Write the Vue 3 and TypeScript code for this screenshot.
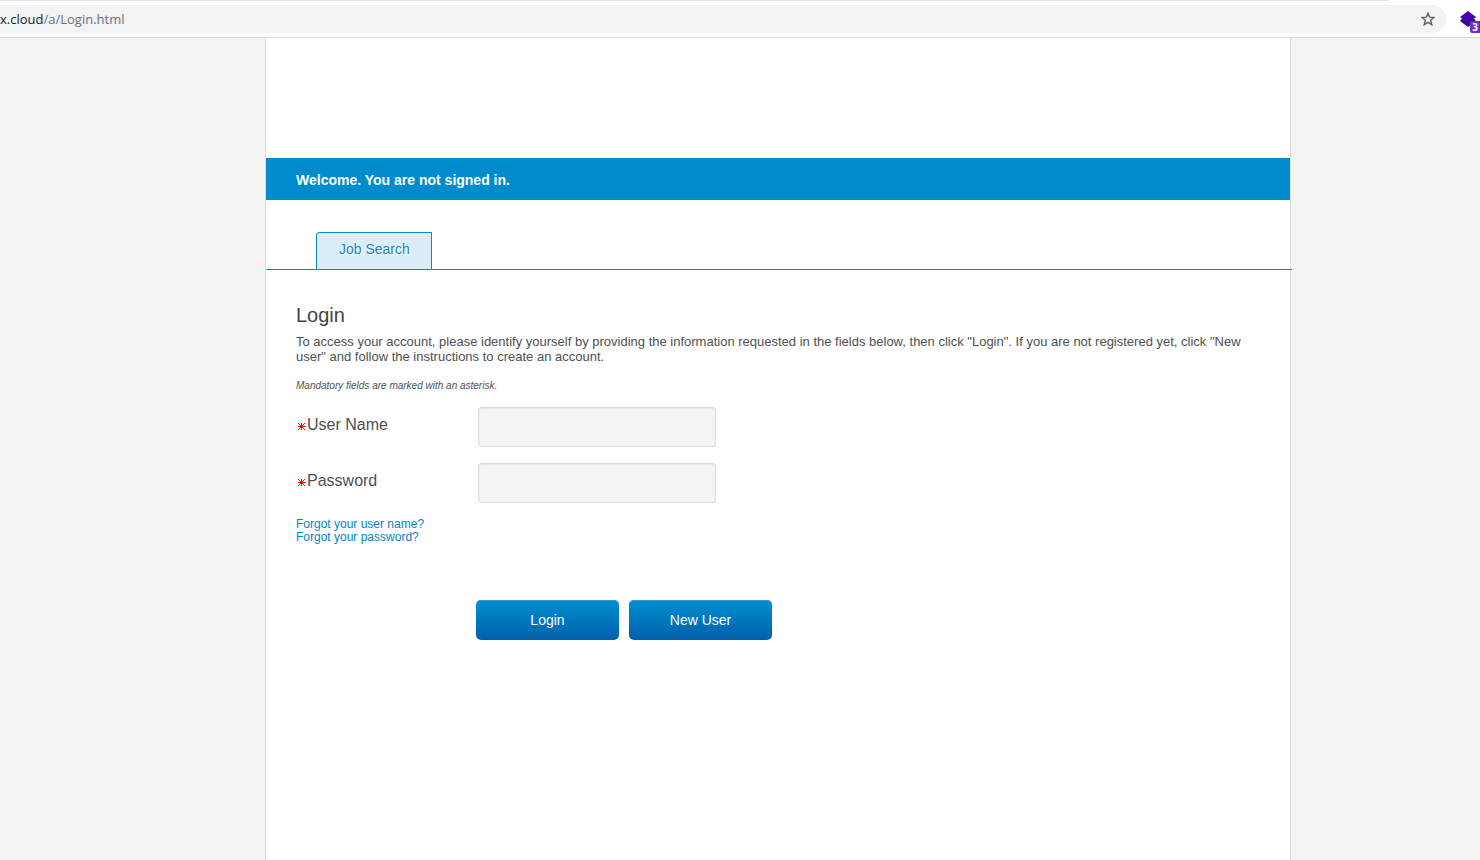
<script setup lang="ts">
import { ref } from 'vue'

interface Field {
  id: string
  label: string
  type: string
}

const fields: Field[] = [
  { id: 'username', label: 'User Name', type: 'text' },
  { id: 'password', label: 'Password', type: 'password' },
]
const values = ref<Record<string, string>>({ username: '', password: '' })
</script>

<template>
  <div class="browser">
    <header class="toolbar">
      <div class="tabstrip"></div>
      <div class="address">
        <div class="url"><span class="host">x.cloud</span>/a/Login.html</div>
        <button class="icon-button" type="button" aria-label="Bookmark this page">
          <svg width="14" height="14" viewBox="0 0 14 14" fill="none" stroke="#5f6368" stroke-width="1.4">
            <path d="M7 1.2 8.6 5.2 13 5.5 9.6 8.3 10.8 12.7 7 10.3 3.2 12.7 4.4 8.3 1 5.5 5.4 5.2Z" />
          </svg>
        </button>
      </div>
      <button class="extension" type="button" aria-label="Extension">
        <svg width="16" height="18" viewBox="0 0 16 18">
          <path d="M0 11 2 8.5H14L16 11 8 17Z" fill="#2c0a80" />
          <path d="M8 1 16 7 8 13 0 7Z" fill="#4503b3" />
        </svg>
        <span class="badge">3</span>
      </button>
    </header>

    <div class="viewport">
      <main class="page">
        <div class="welcome">Welcome. You are not signed in.</div>
        <nav class="tabs">
          <a class="tab" href="#">Job Search</a>
        </nav>
        <form class="login" @submit.prevent>
          <h1>Login</h1>
          <p class="intro">
            To access your account, please identify yourself by providing the information requested in
            the fields below, then click "Login". If you are not registered yet, click "New user" and
            follow the instructions to create an account.
          </p>
          <p class="note">Mandatory fields are marked with an asterisk.</p>
          <div v-for="f in fields" :key="f.id" class="field">
            <label :for="f.id">
              <svg width="8" height="7" viewBox="0 0 8 7" fill="#ff0000" shape-rendering="crispEdges">
                <path d="M3 0H4V7H3ZM0 3H8V4H0ZM1 1H2V2H1ZM0 0H1V1H0ZM2 2H5V3H2ZM5 1H6V2H5ZM6 0H7V1H6ZM2 4H5V5H2ZM1 5H2V6H1ZM0 6H1V7H0ZM5 5H6V6H5ZM6 6H7V7H6Z" />
              </svg>
              <span>{{ f.label }}</span>
            </label>
            <input :id="f.id" v-model="values[f.id]" :type="f.type" />
          </div>
          <div class="links">
            <a href="#">Forgot your user name?</a>
            <a href="#">Forgot your password?</a>
          </div>
          <div class="actions">
            <button class="action" type="submit">Login</button>
            <button class="action" type="button">New User</button>
          </div>
        </form>
      </main>
    </div>
  </div>
</template>

<style>
body {
  margin: 0;
  background: #f4f4f4;
}
</style>

<style scoped>
.browser {
  display: flex;
  flex-direction: column;
  min-height: 100vh;
  overflow-x: hidden;
  font-family: "Liberation Sans", Arial, sans-serif;
  color: #505050;
}
.toolbar {
  display: grid;
  grid-template-columns: 1fr 34px;
  grid-template-rows: 1px 36px;
  align-items: center;
  background: #fff;
  border-bottom: 1px solid #d9dbde;
}
.tabstrip {
  grid-column: 1 / -1;
  height: 1px;
  margin-right: 90px;
  background: #e4e7eb;
}
.address {
  display: flex;
  align-items: center;
  justify-content: space-between;
  height: 28px;
  padding-right: 11px;
  background: #f1f3f4;
  border-radius: 0 14px 14px 0;
}
.url {
  font: 13px/20px "Open Sans", "Noto Sans", sans-serif;
  color: #6c7075;
}
.host {
  color: #202124;
}
.icon-button,
.extension {
  display: flex;
  padding: 0;
  border: 0;
  background: none;
}
.extension {
  position: relative;
  margin-left: 14px;
}
.badge {
  position: absolute;
  left: 10px;
  top: 11px;
  width: 10px;
  height: 12px;
  background: #6931c2;
  border-radius: 2px 0 0 2px;
  color: #fff;
  font: bold 10px/12px "Open Sans", sans-serif;
  text-align: center;
}
.viewport {
  display: grid;
  flex: 1;
  grid-template-columns: 265fr minmax(0, 1026px) 189fr;
}
.page {
  grid-column: 2;
  padding-top: 120px;
  background: #fff;
  border: solid #dedede;
  border-width: 0 1px;
}
.welcome {
  padding: 12px 30px 10px;
  background: #008ccc;
  color: #fff;
  font-size: 14px;
  font-weight: bold;
  line-height: 20px;
}
.tabs {
  display: flex;
  margin-right: -2px;
  padding: 32px 50px 0;
  border-bottom: 1px solid #1287bd;
}
.tab {
  padding: 6px 21px 10px 22px;
  border: 1px solid #008ccc;
  border-bottom: 0;
  border-radius: 4px 0 0 0;
  background: #dcedf9;
  color: #1a86bf;
  font-size: 14px;
  line-height: 20px;
  text-decoration: none;
  text-shadow: 1px 1px 0 #fff;
}
.login {
  padding: 32px 30px;
}
h1 {
  margin: 0;
  color: #444;
  font-size: 20px;
  font-weight: normal;
  line-height: 26px;
}
.intro {
  margin: 6px 0 0;
  font-size: 13px;
  line-height: 15px;
}
.note {
  margin: 16px 0 15px;
  font-size: 10px;
  font-style: italic;
  line-height: 12px;
}
.field {
  display: flex;
  margin-bottom: 16px;
}
.field label {
  display: flex;
  align-items: center;
  gap: 1px;
  box-sizing: border-box;
  width: 182px;
  height: 36px;
  padding-left: 2px;
  font-size: 16px;
}
.field svg {
  margin-top: 3px;
}
.field input {
  box-sizing: border-box;
  width: 238px;
  height: 40px;
  padding: 0 10px;
  border: 1px solid #dedede;
  border-radius: 3px;
  outline: 0;
  background: #f4f4f4;
  box-shadow: inset 0 1px 2px #e6e6e6;
  font: inherit;
}
.links {
  display: flex;
  flex-direction: column;
  align-items: flex-start;
  margin-top: -1px;
  font-size: 12px;
  line-height: 13px;
}
.links a {
  color: #0084c9;
  text-decoration: none;
}
.actions {
  display: flex;
  gap: 10px;
  margin-top: 56px;
  padding-left: 180px;
}
.action {
  width: 143px;
  height: 40px;
  padding: 0;
  border: 0;
  border-radius: 5px;
  background: linear-gradient(#008fd0, #005fa9);
  box-shadow: inset 0 1px 0 #2f94df;
  color: #fff;
  font: 14px/20px "Liberation Sans", Arial, sans-serif;
}
</style>
